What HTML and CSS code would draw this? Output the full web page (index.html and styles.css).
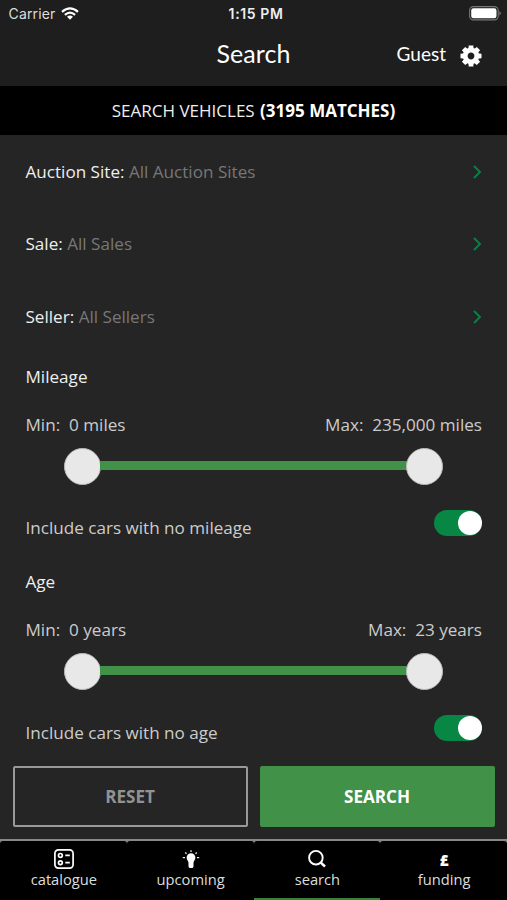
FILE: index.html
```html
<!DOCTYPE html>
<html lang="en">
<head>
<meta charset="utf-8">
<title>Search</title>
<link rel="stylesheet" href="styles.css">
</head>
<body>
<div class="app">
  <header class="header">
    <div class="status">
      <div class="carrier"><span>Carrier</span>
        <svg class="wifi" viewBox="0 0 18 13" width="18" height="13"><g fill="none" stroke="#fff" stroke-width="2.2"><path d="M1 4.8Q9-2.1 17 4.8"/><path d="M3.9 7.9Q9 3.3 14.1 7.9"/></g><path d="M6 9.7Q9 7.2 12 9.7L9 12.7Z" fill="#fff"/></svg>
      </div>
      <span class="time">1:15 PM</span>
      <svg class="battery" viewBox="0 0 32 15" width="32" height="15"><rect x=".6" y=".6" width="28.6" height="13.3" rx="3.8" fill="none" stroke="#777" stroke-width="1.1"/><rect x="2.2" y="2.2" width="25.3" height="10" rx="2.2" fill="#fff"/><path d="M30.4 5Q31.8 6 31.8 7.2T30.4 9.5Z" fill="#777"/></svg>
    </div>
    <div class="nav">
      <h1>Search</h1>
      <div class="account"><span>Guest</span>
        <svg class="gear" viewBox="-11 -11 22 22" width="22" height="22"><defs><path id="tooth" d="M-2.8-6L-2.3-10.5H2.3L2.8-6Z"/></defs><g fill="#fff"><use href="#tooth"/><use href="#tooth" transform="rotate(45)"/><use href="#tooth" transform="rotate(90)"/><use href="#tooth" transform="rotate(135)"/><use href="#tooth" transform="rotate(180)"/><use href="#tooth" transform="rotate(225)"/><use href="#tooth" transform="rotate(270)"/><use href="#tooth" transform="rotate(315)"/></g><circle r="5.800" fill="none" stroke="#fff" stroke-width="4.800"/></svg>
      </div>
    </div>
  </header>
  <div class="banner"><span>SEARCH VEHICLES <b>(3195 MATCHES)</b></span></div>
  <main class="form">
    <div class="picker"><span>Auction Site: <i>All Auction Sites</i></span><svg viewBox="0 0 10 14" width="10" height="14"><path d="M2 1l6 6-6 6"/></svg></div>
    <div class="picker"><span>Sale: <i>All Sales</i></span><svg viewBox="0 0 10 14" width="10" height="14"><path d="M2 1l6 6-6 6"/></svg></div>
    <div class="picker"><span>Seller: <i>All Sellers</i></span><svg viewBox="0 0 10 14" width="10" height="14"><path d="M2 1l6 6-6 6"/></svg></div>
    <section class="range">
      <h2>Mileage</h2>
      <div class="limits"><span>Min:&nbsp; 0 miles</span><span>Max:&nbsp; 235,000 miles</span></div>
      <div class="slider"><span class="thumb"></span><span class="track"></span><span class="thumb"></span></div>
      <div class="include"><span>Include cars with no mileage</span><span class="toggle"><span class="knob"></span></span></div>
    </section>
    <section class="range">
      <h2>Age</h2>
      <div class="limits"><span>Min:&nbsp; 0 years</span><span>Max:&nbsp; 23 years</span></div>
      <div class="slider"><span class="thumb"></span><span class="track"></span><span class="thumb"></span></div>
      <div class="include"><span>Include cars with no age</span><span class="toggle"><span class="knob"></span></span></div>
    </section>
  </main>
  <div class="actions"><button class="reset">RESET</button><button class="submit">SEARCH</button></div>
  <nav class="tabs">
    <div class="tab"><svg viewBox="0 0 20 20" width="20" height="20" fill="none" stroke="#fff"><rect x=".9" y=".9" width="18.2" height="18.2" rx="3.5" stroke-width="1.7"/><circle cx="6.4" cy="6.4" r="1.9" stroke-width="1.7"/><circle cx="6.4" cy="13.7" r="1.9" stroke-width="1.7"/><path d="M11.3 6.4h4.5M11.3 13.7h4.5" stroke-width="1.7"/></svg><span>catalogue</span></div>
    <div class="tab"><svg viewBox="0 0 20 20" width="20" height="20"><path d="M10 4.300a4.400 4.400 0 0 1 4.400 4.400c0 2-1.600 2.800-1.900 5H7.500C7.200 11.500 5.600 10.700 5.600 8.700a4.400 4.400 0 0 1 4.400-4.400ZM7.500 13.700h5v4l-1 1.300H8.500l-1-1.300Z" fill="#fff"/><path d="M10 1.200v1.900M4.200 3.500l1.300 1.200M15.800 3.500l-1.300 1.200M1.800 8.700h2.200M16 8.700h2.200" stroke="#eee" stroke-width="1.300"/></svg><span>upcoming</span></div>
    <div class="tab active"><svg viewBox="0 0 20 20" width="20" height="20" fill="none" stroke="#fff"><circle cx="8.900" cy="8.700" r="6.800" stroke-width="1.900"/><path d="M13.500 13.300l4.500 4.200" stroke-width="2.500"/></svg><span>search</span></div>
    <div class="tab"><div class="pound">£</div><span>funding</span></div>
  </nav>
</div>
</body>
</html>
```
FILE: styles.css
```css
* { box-sizing: border-box; }
body { margin: 0; background: #252525; color: #eee; font-family: "Open Sans", sans-serif; }
h1, h2 { margin: 0; font-weight: 400; }
svg { display: block; flex: none; }
.app { width: 507px; height: 900px; display: flex; flex-direction: column; overflow: hidden; }
.header { height: 86px; background: #1e1e1e; flex: none; }
.status { height: 28px; padding: 0 6px 0 8px; display: grid; grid-template-columns: 1fr auto 1fr; align-items: center; font-family: Inter, sans-serif; font-size: 14px; line-height: 18px; color: #ddd; }
.carrier { display: flex; align-items: center; gap: 6px; letter-spacing: .15px; margin-left: .5px; }
.wifi { margin-top: -2px; }
.time { font-weight: 600; color: #eee; letter-spacing: .6px; margin-right: -3px; }
.battery { justify-self: end; margin-top: -1px; }
.nav { height: 58px; padding: 0 25px; display: grid; grid-template-columns: 1fr auto 1fr; align-items: center; font-family: Lato, sans-serif; color: #fff; }
.nav h1 { grid-column: 2; font-size: 25px; line-height: 30px; margin-top: -8px; letter-spacing: .1px; }
.account { display: flex; align-items: center; justify-content: flex-end; gap: 14px; font-size: 19px; line-height: 24px; margin-top: -4px; }
.account span { margin-top: -3px; }
.gear { margin-top: 1px; }
.banner { height: 49px; background: #000; display: flex; justify-content: center; align-items: center; font-size: 17px; color: #eee; flex: none; }
.banner b { color: #fff; margin-left: 1px; }
.form { height: 631px; padding: 0 25px 0 25.5px; flex: none; font-size: 17.1px; }
.picker { height: 72.5px; display: flex; align-items: center; justify-content: space-between; color: #eee; }
.picker i { font-style: normal; color: #777; }
.picker svg { margin-top: 1px; }
.picker path { fill: none; stroke: #078346; stroke-width: 1.9; }
.range { height: 205.3px; padding-top: 12px; }
.range h2 { height: 24px; line-height: 24px; font-size: 17.1px; }
.limits { display: flex; justify-content: space-between; margin-top: 24px; height: 24px; line-height: 24px; color: #ccc; }
.slider { height: 38px; margin: 11px 39px 0 38.5px; display: flex; align-items: center; }
.thumb { width: 37px; height: 37px; border-radius: 50%; background: #e8e8e8; border: 1px solid #bbb; flex: none; }
.track { flex: 1; height: 9px; background: #419248; margin: -3px -1px 0; }
.include { height: 26px; display: flex; justify-content: space-between; margin-top: 24px; color: #ccc; }
.include > span:first-child { line-height: 24px; margin-top: 6px; }
.toggle { width: 48.5px; height: 26px; border-radius: 13px; background: #078743; padding: 1px .5px; display: flex; justify-content: flex-end; }
.knob { width: 24px; height: 24px; border-radius: 50%; background: #fff; }
.actions { height: 73px; display: grid; grid-template-columns: 1fr 1fr; gap: 12px; padding: 0 12px 12px 13px; flex: none; }
.actions button { font: 700 17.1px "Open Sans", sans-serif; border-radius: 2px; padding: 0 1px 1px 0; }
.reset { background: #252525; color: #929292; border: 2px solid #999; }
.submit { background: #419148; color: #fff; border: 0; }
.tabs { height: 61px; display: grid; grid-template-columns: repeat(4, 1fr); background: #888; padding-top: 2px; flex: none; }
.tab { background: #000; border-radius: 3px 3px 0 0; display: flex; flex-direction: column; align-items: center; padding: 8px 0 0 1px; font-size: 14.7px; line-height: 20px; color: #ddd; }
.active { border-bottom: 2px solid #35833d; }
.pound { height: 20px; padding-top: 4px; font-family: "Open Sans", sans-serif; font-size: 15px; line-height: 15px; font-weight: 800; color: #fff; }
```
